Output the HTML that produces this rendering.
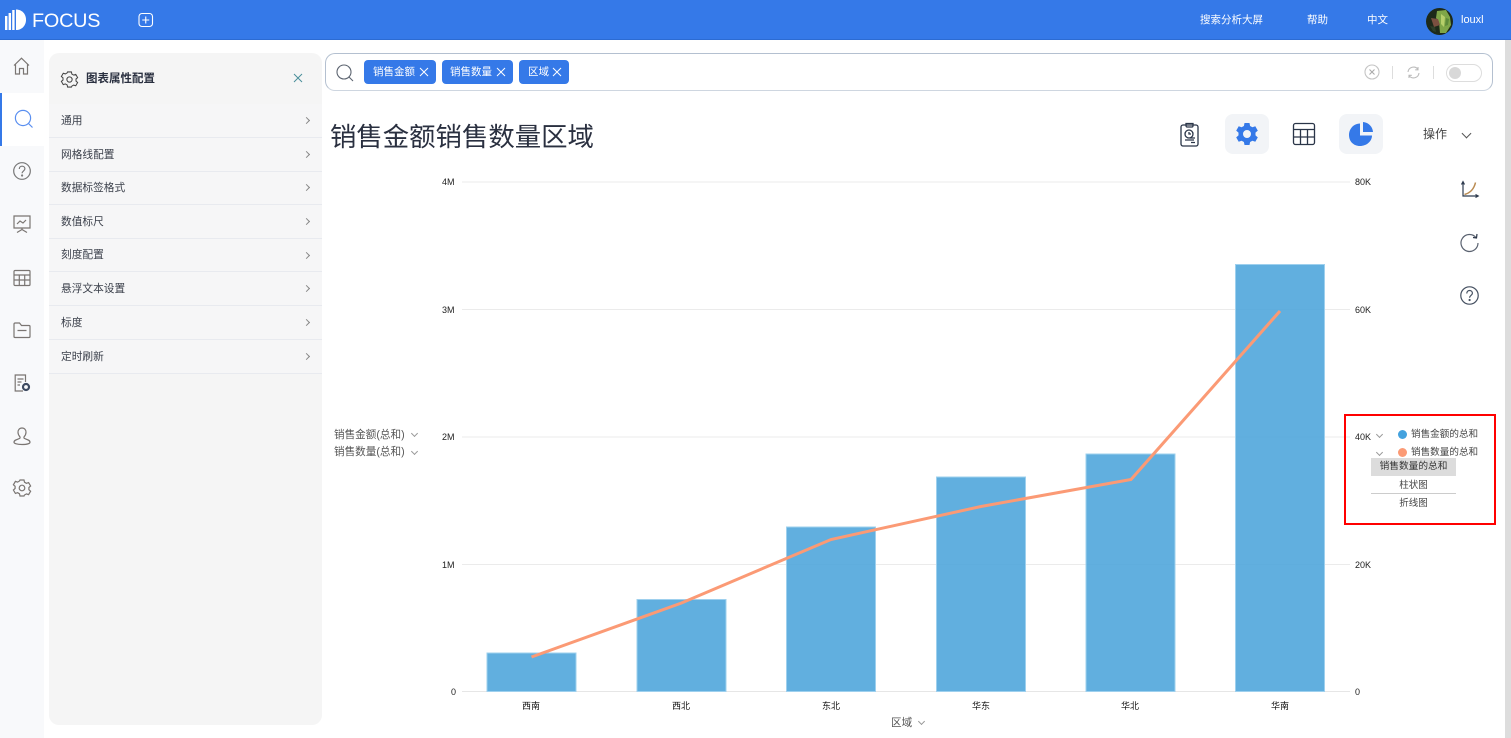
<!DOCTYPE html>
<html lang="zh"><head><meta charset="utf-8"><title>FOCUS</title>
<style>
html,body{margin:0;padding:0;width:1511px;height:738px;overflow:hidden;background:#fff}
body{font-family:"Liberation Sans","Noto Sans CJK SC",sans-serif;color:#333;position:relative}
.a{position:absolute;white-space:nowrap}
svg{position:absolute;overflow:visible}
.top{left:0;top:0;width:1511px;height:39px;background:#3579e8;border-bottom:1px solid #2c6bd2}
.t{color:#fff;font-size:10.500px;line-height:14px;top:13px}
.side{left:0;top:40px;width:44px;height:698px;background:#f8f9fb}
.act{left:0;top:93px;width:44px;height:53px;background:#fff}
.actb{left:0;top:93px;width:2px;height:53px;background:#3579e8}
.panel{left:49px;top:53px;width:273px;height:672px;background:#f5f5f5;border-radius:10px}
.rowbg{left:49px;top:104px;width:273px;height:270px;background:#f6f6f7}
.row{left:49px;width:273px;height:33px;border-bottom:1px solid #e8eaef;font-size:10.700px;color:#3a3f4a;line-height:35px;text-indent:12px}
.chev{left:304px;width:4px;height:4px;border-top:1px solid #888;border-right:1px solid #888;transform:rotate(45deg)}
.search{left:325px;top:53px;width:1166px;height:36px;border:1px solid #b4c0d0;border-bottom-color:#ced6e0;border-radius:10px;background:#fff}
.tag{top:60px;height:24px;background:#3579e8;border-radius:4px;color:#fff;font-size:10.500px;line-height:25px;border:none}
.btn{width:44px;height:40px;background:#f2f4f7;border-radius:8px;top:114px}
.title{left:330px;top:119px;font-size:26.400px;line-height:36px;color:#2a3040}
.ax{font-size:9px;color:#222;line-height:12px}
.cat{font-size:9px;color:#111;line-height:12px;width:40px;text-align:center;top:700px}
.lab{font-size:10.600px;color:#555;line-height:14px}
.v{width:4px;height:4px;border-right:1px solid #999;border-bottom:1px solid #999;transform:rotate(45deg)}
.scroll{left:1505px;top:40px;width:6px;height:698px;background:#ddd}
</style></head><body>

<div class="a top"></div>
<svg style="left:5px;top:9px" width="22" height="22" viewBox="0 0 22 22"><g fill="#fff"><rect x="0" y="7" width="2.400" height="14"/><rect x="3.600" y="4" width="2.400" height="17"/><rect x="7.200" y="1" width="2.400" height="20"/><path d="M11 0.500c6 0 10 4.500 10 10.200s-4 10.300-10 10.300z"/></g></svg>
<div class="a" style="left:32px;top:9px;font-size:19.800px;line-height:24px;color:#fff;letter-spacing:-.2px">FOCUS</div>
<svg style="left:138px;top:12px" width="16" height="16" viewBox="0 0 16 16" fill="none" stroke="#fff" stroke-width="1.100"><rect x="1" y="1.500" width="13.500" height="13" rx="3"/><path d="M7.750 4.500v7M4.250 8h7"/></svg>
<div class="a t" style="left:1200px">搜索分析大屏</div>
<div class="a t" style="left:1307px">帮助</div>
<div class="a t" style="left:1367px">中文</div>
<svg style="left:1426px;top:8px" width="27" height="27" viewBox="0 0 27 27"><circle cx="13.500" cy="13.500" r="13.500" fill="#1d2a1a"/><path d="M11 3l9-1 4 7 1 8-5 8-6 0-1-11-3-4z" fill="#7fa648"/><path d="M5 10l7 1 2 6-6 2z" fill="#7a5040"/><path d="M15 6l4 3-1 10-3-3z" fill="#b6cf6a"/><path d="M20 10l3 1-1 6-3 1z" fill="#5d8a3a"/><path d="M4 18l5 1 1 5-3-1z" fill="#2d3f28"/></svg>
<div class="a t" style="left:1461px;font-size:11px">louxl</div>

<div class="a side"></div>
<div class="a act"></div>
<div class="a actb"></div>
<div class="a scroll"></div>

<svg style="left:13px;top:57px" width="18" height="18" viewBox="0 0 18 18" fill="none" stroke="#7a7572" stroke-width="1.200"><path d="M1 8.500L8.500 1.200 16 8.500M2.500 7.500V17h4v-5.500h4V17h4V7.500"/></svg>
<svg style="left:14px;top:109px" width="20" height="20" viewBox="0 0 20 20" fill="none" stroke="#5a8ff0" stroke-width="1.200"><circle cx="9" cy="9" r="7.600"/><path d="M14.500 14.500L18.500 18.500"/></svg>
<svg style="left:13px;top:162px" width="18" height="18" viewBox="0 0 18 18" fill="none" stroke="#777" stroke-width="1.200"><circle cx="9" cy="9" r="8.300"/><path d="M6.300 7c0-1.700 1.200-2.800 2.800-2.800S11.900 5.300 11.900 6.800c0 2-2.800 2.300-2.800 4.500"/><circle cx="9.100" cy="13.500" r=".5"/></svg>
<svg style="left:13px;top:215px" width="18" height="18" viewBox="0 0 18 18" fill="none" stroke="#7a7572" stroke-width="1.200"><path d="M1 1h16v12H1zM9 13v2M9 14.500l-5 3M9 14.500l5 3M4 9l3-3 3 2 3-3"/></svg>
<svg style="left:13px;top:269px" width="18" height="18" viewBox="0 0 18 18" fill="none" stroke="#7a7572" stroke-width="1.200"><rect x="1" y="1.500" width="16" height="15" rx="1"/><path d="M1 6h16M1 11h16M6.300 6v10.500M11.700 6v10.500"/></svg>
<svg style="left:13px;top:322px" width="18" height="16" viewBox="0 0 18 16" fill="none" stroke="#7a7572" stroke-width="1.200"><path d="M1 14.500V2.200C1 1.500 1.500 1 2.200 1h4.300l2 2.500H16c.6 0 1 .4 1 1v10c0 .6-.4 1-1 1H2c-.6 0-1-.4-1-1zM4.500 8.500h9"/></svg>
<svg style="left:14px;top:374px" width="18" height="18" viewBox="0 0 18 18" fill="none" stroke="#7a7572" stroke-width="1.200"><path d="M9 17H1.200V1H11.500v7M3.500 5h6M3.500 8h4M3.500 11h2.500"/><circle cx="12" cy="13" r="3" stroke="#3d4a60" stroke-width="2.200"/></svg>
<svg style="left:13px;top:427px" width="18" height="18" viewBox="0 0 18 18" fill="none" stroke="#7a7572" stroke-width="1.200"><path d="M9 1c2.600 0 4 2 4 4.300 0 2-1 3.500-1.800 4.400-.6.700-.3 1.500.6 1.900 2.500.9 5.200 1.600 5.200 3.600 0 1.300-3 2.300-8 2.300s-8-1-8-2.300c0-2 2.700-2.700 5.200-3.600.9-.4 1.200-1.200.6-1.900C6 8.800 5 7.300 5 5.300 5 3 6.400 1 9 1z"/></svg>
<svg style="left:13px;top:479px" width="18" height="18" viewBox="0 0 18 18" fill="none" stroke="#7a7572" stroke-width="1.200"><path d="M7 1h4l.5 2.200 1.900 1.100 2.200-.7 2 3.400-1.700 1.500v2.200l1.700 1.500-2 3.400-2.200-.7-1.900 1.100L11 17H7l-.5-2.200-1.900-1.100-2.200.7-2-3.400 1.700-1.500V7.300L.4 5.800l2-3.400 2.200.7 1.900-1.100z"/><circle cx="9" cy="9" r="2.800"/></svg>

<div class="a panel"></div>
<div class="a rowbg"></div>
<svg style="left:61px;top:71px" width="17" height="17" viewBox="0 0 18 18" fill="none" stroke="#444" stroke-width="1.100"><path d="M7 1h4l.5 2.200 1.900 1.100 2.200-.7 2 3.400-1.700 1.500v2.200l1.700 1.500-2 3.400-2.200-.7-1.900 1.100L11 17H7l-.5-2.200-1.900-1.100-2.200.7-2-3.400 1.700-1.500V7.300L.4 5.800l2-3.400 2.200.7 1.900-1.100z"/><circle cx="9" cy="9" r="2.800"/></svg>
<div class="a" style="left:86px;top:71px;font-size:11.500px;line-height:16px;color:#2a3040;font-weight:700">图表属性配置</div>
<svg style="left:294px;top:74px" width="8" height="8" viewBox="0 0 8 8" stroke="#4a8f9a" stroke-width="1"><path d="M0 0l8 8M8 0L0 8"/></svg>

<div class="a row" style="top:104px">通用</div><div class="a chev" style="top:118px"></div>
<div class="a row" style="top:138px">网格线配置</div><div class="a chev" style="top:152px"></div>
<div class="a row" style="top:171px">数据标签格式</div><div class="a chev" style="top:185px"></div>
<div class="a row" style="top:205px">数值标尺</div><div class="a chev" style="top:219px"></div>
<div class="a row" style="top:238px">刻度配置</div><div class="a chev" style="top:253px"></div>
<div class="a row" style="top:272px">悬浮文本设置</div><div class="a chev" style="top:286px"></div>
<div class="a row" style="top:306px">标度</div><div class="a chev" style="top:320px"></div>
<div class="a row" style="top:340px">定时刷新</div><div class="a chev" style="top:354px"></div>

<div class="a search"></div>
<svg style="left:336px;top:64px" width="18" height="18" viewBox="0 0 18 18" fill="none" stroke="#5c6470" stroke-width="1.100"><circle cx="8" cy="8" r="7"/><path d="M13 13l4 4"/></svg>
<div class="a tag" style="left:364px;width:72px"><span class="a" style="left:9px;top:0">销售金额</span><svg style="left:56px;top:8px" width="8" height="8" viewBox="0 0 8 8" stroke="#fff" stroke-width="1"><path d="M0 0l8 8M8 0L0 8"/></svg></div>
<div class="a tag" style="left:442px;width:71px"><span class="a" style="left:8px;top:0">销售数量</span><svg style="left:55px;top:8px" width="8" height="8" viewBox="0 0 8 8" stroke="#fff" stroke-width="1"><path d="M0 0l8 8M8 0L0 8"/></svg></div>
<div class="a tag" style="left:519px;width:50px"><span class="a" style="left:9px;top:0">区域</span><svg style="left:34px;top:8px" width="8" height="8" viewBox="0 0 8 8" stroke="#fff" stroke-width="1"><path d="M0 0l8 8M8 0L0 8"/></svg></div>

<svg style="left:1364px;top:64px" width="16" height="16" viewBox="0 0 16 16" fill="none" stroke="#c4c4c4" stroke-width="1.100"><circle cx="8" cy="8" r="7"/><path d="M5.500 5.500l5 5M10.500 5.500l-5 5" stroke="#aaa"/></svg>
<div class="a" style="left:1392px;top:66px;width:1px;height:13px;background:#ddd"></div>
<svg style="left:1407px;top:66px" width="13" height="13" viewBox="0 0 13 13" fill="none" stroke="#bbb" stroke-width="1.100"><path d="M1 6A5.500 5.500 0 0 1 11 3.500M12 7A5.500 5.500 0 0 1 2 9.500M11 1v2.800H8.200M2 12V9.300h2.800"/></svg>
<div class="a" style="left:1433px;top:66px;width:1px;height:13px;background:#ddd"></div>
<div class="a" style="left:1446px;top:64px;width:34px;height:16px;border:1px solid #ddd;border-radius:9px;background:#fff"></div>
<div class="a" style="left:1449px;top:67px;width:12px;height:12px;border-radius:50%;background:#d8d8d8"></div>

<div class="a title">销售金额销售数量区域</div>

<svg style="left:1180px;top:122px" width="20" height="25" viewBox="0 0 20 25" fill="none" stroke="#2a3548" stroke-width="1.300"><rect x="1" y="3" width="17" height="21" rx="2"/><path d="M6 3V1.500h7V3M6 3.500c0 1 .5 1.500 1 1.500h5c.5 0 1-.5 1-1.500"/><circle cx="9" cy="12" r="4"/><path d="M9 10v2h2M5 18h9M11 20.500h4M10 16h5"/></svg>
<div class="a btn" style="left:1225px"></div>
<svg style="left:1235px;top:122px" width="24" height="24" viewBox="0 0 24 24"><path fill="#3579e8" fill-rule="evenodd" d="M9.500 1h5l.6 3 2.300 1.300 2.900-1 2.500 4.300-2.300 2v2.800l2.300 2-2.500 4.300-2.900-1-2.300 1.300-.6 3h-5l-.6-3-2.300-1.300-2.900 1L1.200 15.400l2.300-2v-2.800l-2.300-2L3.700 4.300l2.900 1L8.900 4zM12 8a4 4 0 1 0 0 8 4 4 0 0 0 0-8z"/></svg>
<svg style="left:1293px;top:123px" width="22" height="22" viewBox="0 0 22 22" fill="none" stroke="#2a3548" stroke-width="1.300"><rect x="0.500" y="0.500" width="21" height="21" rx="2"/><path d="M.5 6.500h21M.5 14h21M7.500 6.500v15M14.500 6.500v15"/></svg>
<div class="a btn" style="left:1339px"></div>
<svg style="left:1349px;top:122px" width="25" height="24" viewBox="0 0 25 24"><path fill="#3579e8" d="M11 1.500v12h12c0 5.800-5.400 10.500-12 10.500S0 19.300 0 13 4.800 1.500 11 1.500z"/><path fill="#3579e8" d="M14 0c5.500.5 9.500 4.500 10 10H14z"/></svg>
<div class="a" style="left:1423px;top:126px;font-size:12px;line-height:16px;color:#444">操作</div>
<div class="a" style="left:1463px;top:130px;width:6px;height:6px;border-right:1px solid #555;border-bottom:1px solid #555;transform:rotate(45deg)"></div>

<svg style="left:1461px;top:181px" width="18" height="19" viewBox="0 0 18 19" fill="none" stroke-width="1.200"><path d="M2 1v14H17" stroke="#2f3c50"/><path d="M.5 3.500L2 .7l1.500 2.800M14.500 13.500l2.700 1.500-2.700 1.500" stroke="#2f3c50"/><path d="M3.500 13.500C9 12 13 8 14.500 1.500" stroke="#b98a50" stroke-width="1.500"/></svg>
<svg style="left:1460px;top:233px" width="19" height="19" viewBox="0 0 19 19" fill="none" stroke="#5a6270" stroke-width="1.200"><path d="M16 4.500A8.500 8.500 0 1 0 18 10"/><path d="M13 4.500l3.500.5.500-4" stroke="#2a3548"/></svg>
<svg style="left:1460px;top:286px" width="19" height="19" viewBox="0 0 19 19" fill="none" stroke="#444f60" stroke-width="1.200"><circle cx="9.500" cy="9.500" r="8.700"/><path d="M6.800 7.500c0-1.800 1.200-3 2.800-3s2.800 1.100 2.800 2.700c0 2-2.800 2.300-2.800 4.600"/><circle cx="9.600" cy="14" r=".5"/></svg>

<svg style="left:0;top:0" width="1511" height="738" viewBox="0 0 1511 738">
<g stroke="#ebebeb" stroke-width="1"><path d="M462 182h888M462 309.500h888M462 437h888M462 564.500h888"/><path d="M462 691.500h888" stroke="#e6e6e6"/></g>
<g fill="#4aa3da" fill-opacity=".87" stroke="#9ed0ee" stroke-width="1">
<rect x="487" y="653" width="89" height="38.500"/>
<rect x="637" y="599.500" width="89" height="92"/>
<rect x="786.500" y="527" width="89" height="164.500"/>
<rect x="936.500" y="477" width="89" height="214.500"/>
<rect x="1086" y="454" width="89" height="237.500"/>
<rect x="1235.500" y="264.500" width="89" height="427"/>
</g>
<polyline fill="none" stroke="#fb9a75" stroke-width="3" points="531.500,657 681.500,603 831,539.500 981,506.500 1131,479.500 1280,311"/>
</svg>

<div class="a ax" style="left:442px;top:176px">4M</div>
<div class="a ax" style="left:442px;top:304px">3M</div>
<div class="a ax" style="left:442px;top:431px">2M</div>
<div class="a ax" style="left:442px;top:559px">1M</div>
<div class="a ax" style="left:451px;top:686px">0</div>
<div class="a ax" style="left:1355px;top:176px">80K</div>
<div class="a ax" style="left:1355px;top:304px">60K</div>
<div class="a ax" style="left:1355px;top:431px">40K</div>
<div class="a ax" style="left:1355px;top:559px">20K</div>
<div class="a ax" style="left:1355px;top:686px">0</div>

<div class="a cat" style="left:511px">西南</div>
<div class="a cat" style="left:661px">西北</div>
<div class="a cat" style="left:811px">东北</div>
<div class="a cat" style="left:961px">华东</div>
<div class="a cat" style="left:1110px">华北</div>
<div class="a cat" style="left:1260px">华南</div>

<div class="a lab" style="left:891px;top:716px">区域</div>
<div class="a v" style="left:919px;top:719px"></div>
<div class="a lab" style="left:334px;top:428px">销售金额(总和)</div>
<div class="a v" style="left:412px;top:431px"></div>
<div class="a lab" style="left:334px;top:445px">销售数量(总和)</div>
<div class="a v" style="left:412px;top:449px"></div>

<div class="a v" style="left:1377px;top:432px"></div>
<div class="a v" style="left:1377px;top:450px"></div>
<div class="a" style="left:1398px;top:430px;width:9px;height:9px;border-radius:50%;background:#44a2de"></div>
<div class="a" style="left:1398px;top:448px;width:9px;height:9px;border-radius:50%;background:#fb9a75"></div>
<div class="a" style="left:1411px;top:428px;font-size:9.600px;line-height:14px;color:#444">销售金额的总和</div>
<div class="a" style="left:1411px;top:446px;font-size:9.600px;line-height:14px;color:#444">销售数量的总和</div>
<div class="a" style="left:1371px;top:458px;width:85px;height:18px;background:#dcdcdc;font-size:9.700px;line-height:18px;text-align:center;color:#333">销售数量的总和</div>
<div class="a" style="left:1371px;top:478px;width:85px;height:15px;border-bottom:1px solid #ccc;font-size:9.500px;line-height:15px;text-align:center;color:#444">柱状图</div>
<div class="a" style="left:1371px;top:496px;width:85px;height:15px;font-size:9.500px;line-height:15px;text-align:center;color:#444">折线图</div>
<div class="a" style="left:1344px;top:414px;width:148px;height:107px;border:2px solid #f00;background:transparent"></div>

</body></html>
